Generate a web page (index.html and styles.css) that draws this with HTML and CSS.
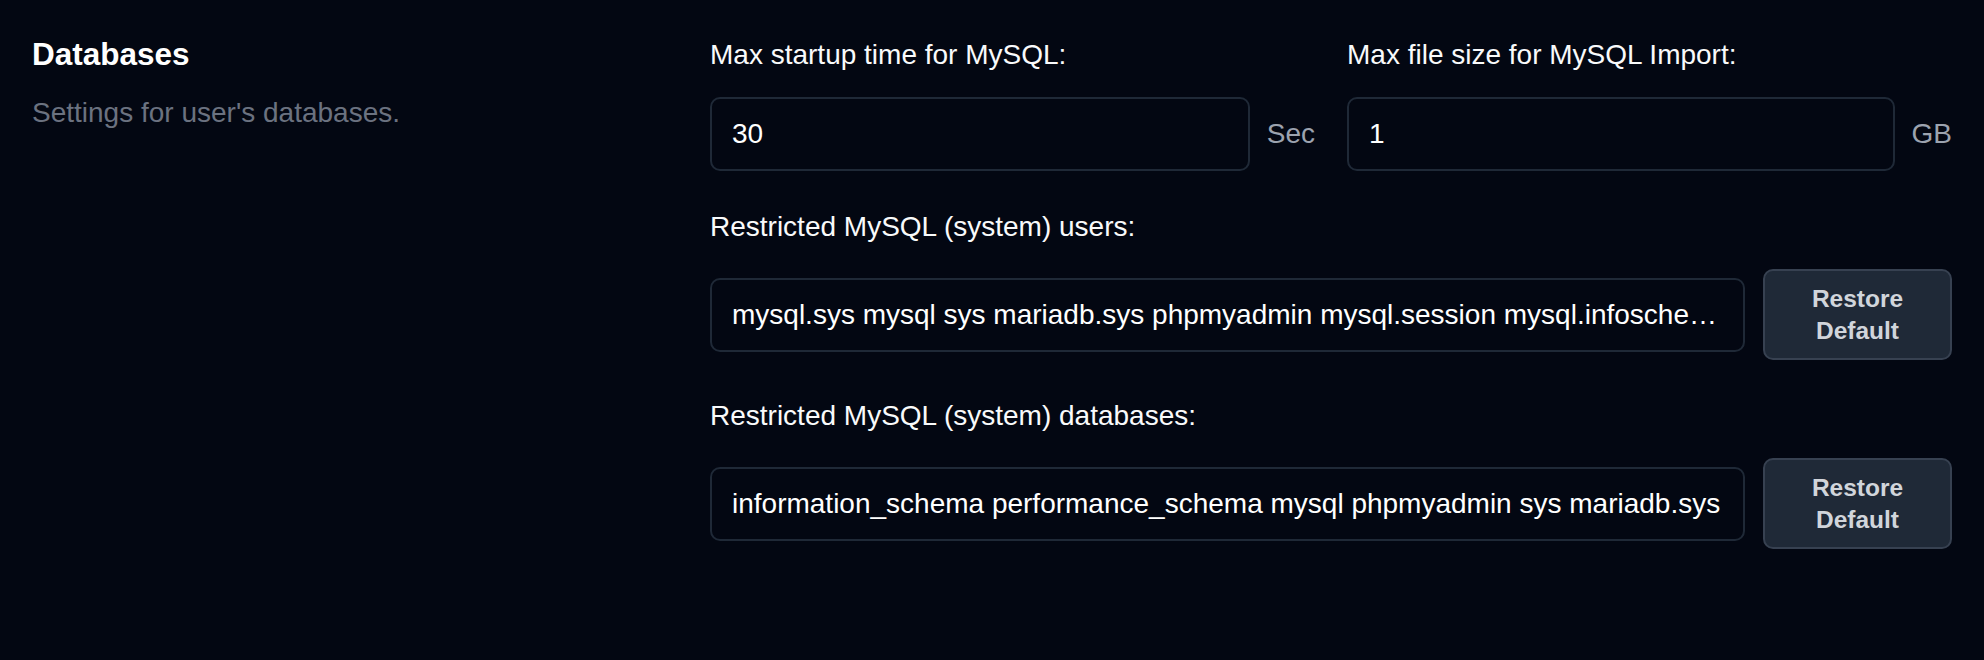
FILE: index.html
```html
<!DOCTYPE html>
<html lang="en">
<head>
  <meta charset="UTF-8" />
  <meta name="viewport" content="width=device-width, initial-scale=1.0"/>
  <title>Databases Settings</title>
  <link rel="stylesheet" href="styles.css">
</head>
<body>

  <section class="settings">
    <div class="intro">
      <h2>Databases</h2>
      <p class="desc">Settings for user's databases.</p>
    </div>

    <div class="fields">
      <!-- Limits -->
      <div class="pair">
        <div class="field">
          <label for="startup">Max startup time for MySQL:</label>
          <div class="row">
            <input id="startup" type="text" value="30">
            <span class="unit">Sec</span>
          </div>
        </div>
        <div class="field">
          <label for="import">Max file size for MySQL Import:</label>
          <div class="row">
            <input id="import" type="text" value="1">
            <span class="unit">GB</span>
          </div>
        </div>
      </div>

      <!-- Restricted users -->
      <div class="field">
        <label for="users">Restricted MySQL (system) users:</label>
        <div class="row">
          <input id="users" type="text" value="mysql.sys mysql sys mariadb.sys phpmyadmin mysql.session mysql.infoschema">
          <button class="restore">Restore Default</button>
        </div>
      </div>

      <!-- Restricted databases -->
      <div class="field">
        <label for="dbs">Restricted MySQL (system) databases:</label>
        <div class="row">
          <input id="dbs" type="text" value="information_schema performance_schema mysql phpmyadmin sys mariadb.sys">
          <button class="restore">Restore Default</button>
        </div>
      </div>
    </div>
  </section>

</body>
</html>
```

FILE: styles.css
```css
body {
  margin: 0;
  background-color: #030712;
  font-family: "Liberation Sans", Arial, sans-serif;
  color: #f9fafb;
}

.settings {
  display: grid;
  grid-template-columns: 678px 1fr;
  padding: 33px 32px;
}

.intro h2 {
  margin: 0;
  font-size: 31.5px;
  line-height: 42px;
  font-weight: bold;
  color: #fff;
}

.desc {
  margin: 17px 0 0;
  font-size: 28px;
  line-height: 42px;
  color: #6b7280;
}

.fields {
  display: flex;
  flex-direction: column;
  gap: 35px;
  padding-top: 1px;
}

.pair {
  display: flex;
  gap: 32px;
}

.pair .field {
  flex: 1;
}

.field label {
  display: block;
  font-size: 28px;
  line-height: 42px;
  color: #f9fafb;
  margin-bottom: 21px;
}

.row {
  display: flex;
  align-items: center;
  gap: 17px;
}

.row input {
  flex: 1;
  min-width: 0;
  box-sizing: border-box;
  height: 74px;
  padding: 0 20px;
  font-family: inherit;
  font-size: 28px;
  color: #fff;
  background-color: #030712;
  border: 2px solid #1f2937;
  border-radius: 10px;
  outline: none;
  text-overflow: ellipsis;
}

.unit {
  font-size: 28px;
  color: #9ca3af;
}

.restore {
  box-sizing: border-box;
  width: 189px;
  flex-shrink: 0;
  margin-left: 1px;
  padding: 12px 20px;
  font-family: inherit;
  font-size: 24.5px;
  line-height: 31.5px;
  font-weight: bold;
  color: #d1d5db;
  background-color: #1f2937;
  border: 2px solid #374151;
  border-radius: 10px;
}
```
